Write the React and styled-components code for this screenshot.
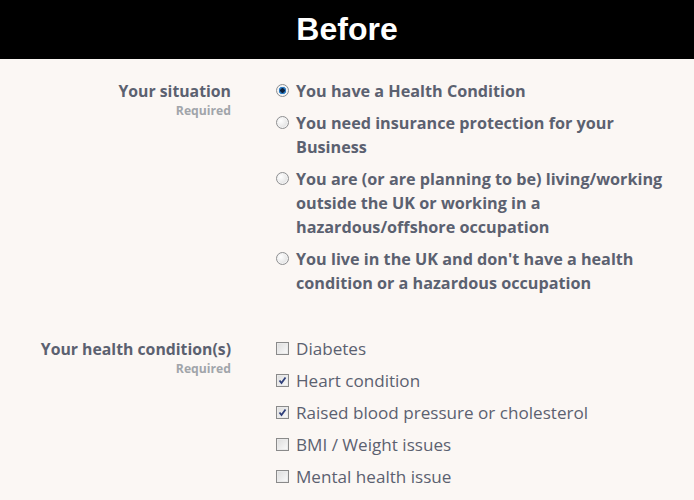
import React from "react";
import styled, { createGlobalStyle } from "styled-components";

const Global = createGlobalStyle`
  html, body { margin: 0; padding: 0; background: #fbf7f4; }
  body { font-family: "Open Sans", "Liberation Sans", sans-serif; color: #5b6170; }
`;

const Header = styled.header`
  height: 59px;
  background: #000;
  display: flex;
  align-items: center;
  justify-content: center;
  color: #fff;
  font-family: "Liberation Sans", Arial, sans-serif;
  font-weight: 700;
  font-size: 32px;
`;

const Form = styled.div`
  padding-top: 20px;
  display: flex;
  flex-direction: column;
  gap: 42px;
`;

const Section = styled.section`
  display: grid;
  grid-template-columns: 231px 1fr;
  column-gap: 45px;
`;

const LabelBlock = styled.div`
  text-align: right;
`;

const Label = styled.div`
  font-weight: 700;
  font-size: 15.8px;
  line-height: 24px;
  color: #5b6170;
`;

const Required = styled.div`
  font-weight: 700;
  font-size: 12.2px;
  line-height: 16px;
  color: #a1a5aa;
`;

const List = styled.div`
  display: flex;
  flex-direction: column;
  gap: 8px;
`;

const Option = styled.label`
  display: flex;
  align-items: flex-start;
  gap: 7px;
  font-size: ${(p) => (p.$bold ? "16.2px" : "17.1px")};
  font-weight: ${(p) => (p.$bold ? 700 : 400)};
  line-height: 24px;
  color: #5b6170;
  max-width: 402px;
`;

const Radio = styled.span`
  flex: none;
  width: 11px;
  height: 11px;
  margin-top: 5px;
  border-radius: 50%;
  border: 1px solid #8e8f91;
  background: ${(p) =>
    p.$checked
      ? "radial-gradient(circle at 50% 50%, #0c1f3a 0 2px, #2b7cc4 2.5px 3.5px, #eef1f3 4px)"
      : "radial-gradient(circle at 35% 35%, #ffffff, #d8d8d8)"};
  box-shadow: inset 0 0 0 1px #f4f4f4;
`;

const Box = styled.span`
  flex: none;
  width: 11px;
  height: 11px;
  margin-top: 5px;
  border: 1px solid #8a8a8a;
  background: linear-gradient(135deg, #dcdcdc, #fbfbfb);
  box-shadow: inset 0 0 0 1px #eaeaea;
  display: flex;
  align-items: center;
  justify-content: center;
`;

function Check() {
  return (
    <svg width="9" height="9" viewBox="0 0 9 9">
      <path d="M1.5 4.5 L3.5 7 L7.5 1.5" fill="none" stroke="#2f3f7a" strokeWidth="1.8" />
    </svg>
  );
}

const situations = [
  { text: "You have a Health Condition", checked: true },
  { text: "You need insurance protection for your Business" },
  { text: "You are (or are planning to be) living/working outside the UK or working in a hazardous/offshore occupation" },
  { text: "You live in the UK and don't have a health condition or a hazardous occupation" },
];

const conditions = [
  { text: "Diabetes" },
  { text: "Heart condition", checked: true },
  { text: "Raised blood pressure or cholesterol", checked: true },
  { text: "BMI / Weight issues" },
  { text: "Mental health issue" },
];

export default function App() {
  return (
    <>
      <Global />
      <Header>Before</Header>
      <Form>
        <Section>
          <LabelBlock>
            <Label>Your situation</Label>
            <Required>Required</Required>
          </LabelBlock>
          <List>
            {situations.map((s) => (
              <Option key={s.text} $bold>
                <Radio $checked={s.checked} />
                <span>{s.text}</span>
              </Option>
            ))}
          </List>
        </Section>
        <Section>
          <LabelBlock>
            <Label>Your health condition(s)</Label>
            <Required>Required</Required>
          </LabelBlock>
          <List>
            {conditions.map((c) => (
              <Option key={c.text}>
                <Box>{c.checked && <Check />}</Box>
                <span>{c.text}</span>
              </Option>
            ))}
          </List>
        </Section>
      </Form>
    </>
  );
}
